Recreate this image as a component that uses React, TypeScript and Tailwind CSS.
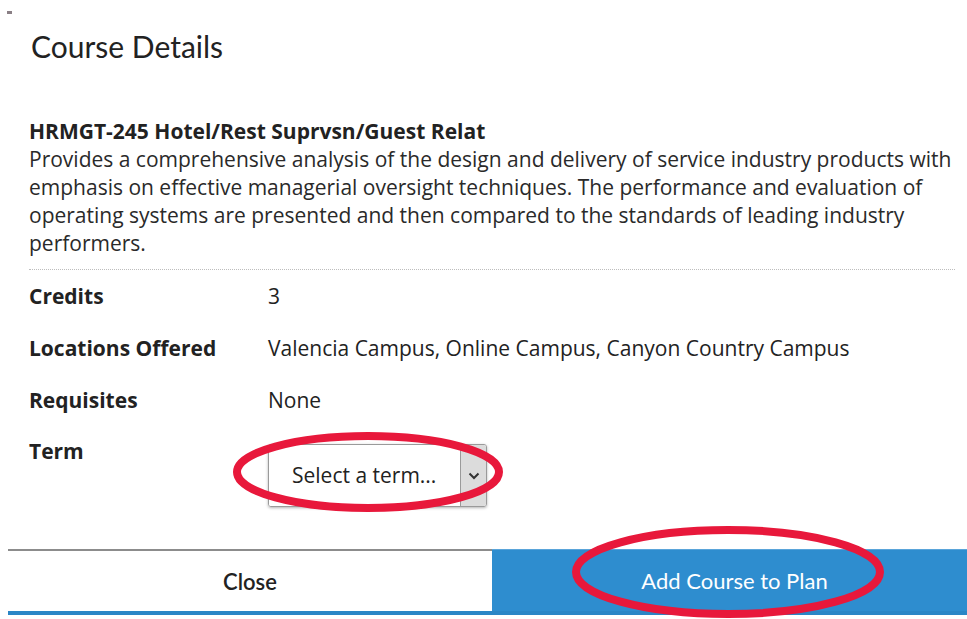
import React from 'react';

const rows = [
  { label: 'Credits', value: '3' },
  { label: 'Locations Offered', value: 'Valencia Campus, Online Campus, Canyon Country Campus' },
  { label: 'Requisites', value: 'None' },
];

// Red hand-drawn style rings that sit over the term picker and the add button
function Ring({ cx, cy, rx, ry }: { cx: number; cy: number; rx: number; ry: number }) {
  return (
    <svg className="absolute left-0 top-0 pointer-events-none" width={967} height={619}>
      <ellipse cx={cx} cy={cy} rx={rx} ry={ry} fill="none" stroke="#e8183b" strokeWidth={8} />
    </svg>
  );
}

export default function App() {
  return (
    <div className="relative w-[967px] h-[619px] overflow-hidden bg-white text-[#222] font-['Open_Sans',sans-serif]">
      <div className="absolute left-[7px] top-[11px] w-[5px] h-[3px] bg-[#8a7f85]" />

      <h2 className="pl-[31px] pt-[26px] text-[30px] leading-[40px] text-[#222] font-['Lato',sans-serif]">
        Course Details
      </h2>

      <div className="pl-[29px] pr-[12px] mt-[51px]">
        <h3 className="text-[21px] leading-[28px] font-bold">HRMGT-245 Hotel/Rest Suprvsn/Guest Relat</h3>
        <p className="text-[21px] leading-[28px] text-[#2a2a2a]">
          Provides a comprehensive analysis of the design and delivery of service industry products with
          emphasis on effective managerial oversight techniques. The performance and evaluation of
          operating systems are presented and then compared to the standards of leading industry
          performers.
        </p>

        <div className="mt-[12px] border-t border-dotted border-[#bdbdbd]">
          {rows.map((r) => (
            <div key={r.label} className="flex items-center h-[52px] pt-[1px] text-[21px]">
              <div className="w-[239px] shrink-0 font-bold">{r.label}</div>
              <div>{r.value}</div>
            </div>
          ))}
          <div className="flex items-start text-[21px]">
            <div className="w-[239px] shrink-0 font-bold leading-[28px] pt-[11px]">Term</div>
            <div className="mt-[18px] flex w-[219px] h-[63px] rounded-[3px] border border-[#9a9a9a] shadow-[0_1px_3px_rgba(0,0,0,0.3)] overflow-hidden">
              <div className="flex-1 flex items-center pl-[23px] bg-white">Select a term...</div>
              <div className="w-[26px] shrink-0 flex items-center justify-center bg-[#dcdcdc] border-l border-[#9a9a9a]">
                <svg width="12" height="8" viewBox="0 0 12 8" className="shrink-0">
                  <path d="M1.5 1.5 L6 6 L10.5 1.5" fill="none" stroke="#333" strokeWidth="2" />
                </svg>
              </div>
            </div>
          </div>
        </div>
      </div>

      <div className="absolute left-[8px] right-0 top-[549px] flex h-[66px] border-b-[4px] border-[#2b86c6] font-['Lato',sans-serif] text-[22px]">
        <button className="w-[484px] bg-white border-t-2 border-[#8c8c8c] text-[#222] font-semibold">
          Close
        </button>
        <button className="flex-1 pl-[10px] bg-[#2e8dcf] border-t border-[#5aa5da] text-white">
          Add Course to Plan
        </button>
      </div>

      <Ring cx={368} cy={472} rx={131} ry={36} />
      <Ring cx={728} cy={572} rx={152} ry={42} />
    </div>
  );
}
